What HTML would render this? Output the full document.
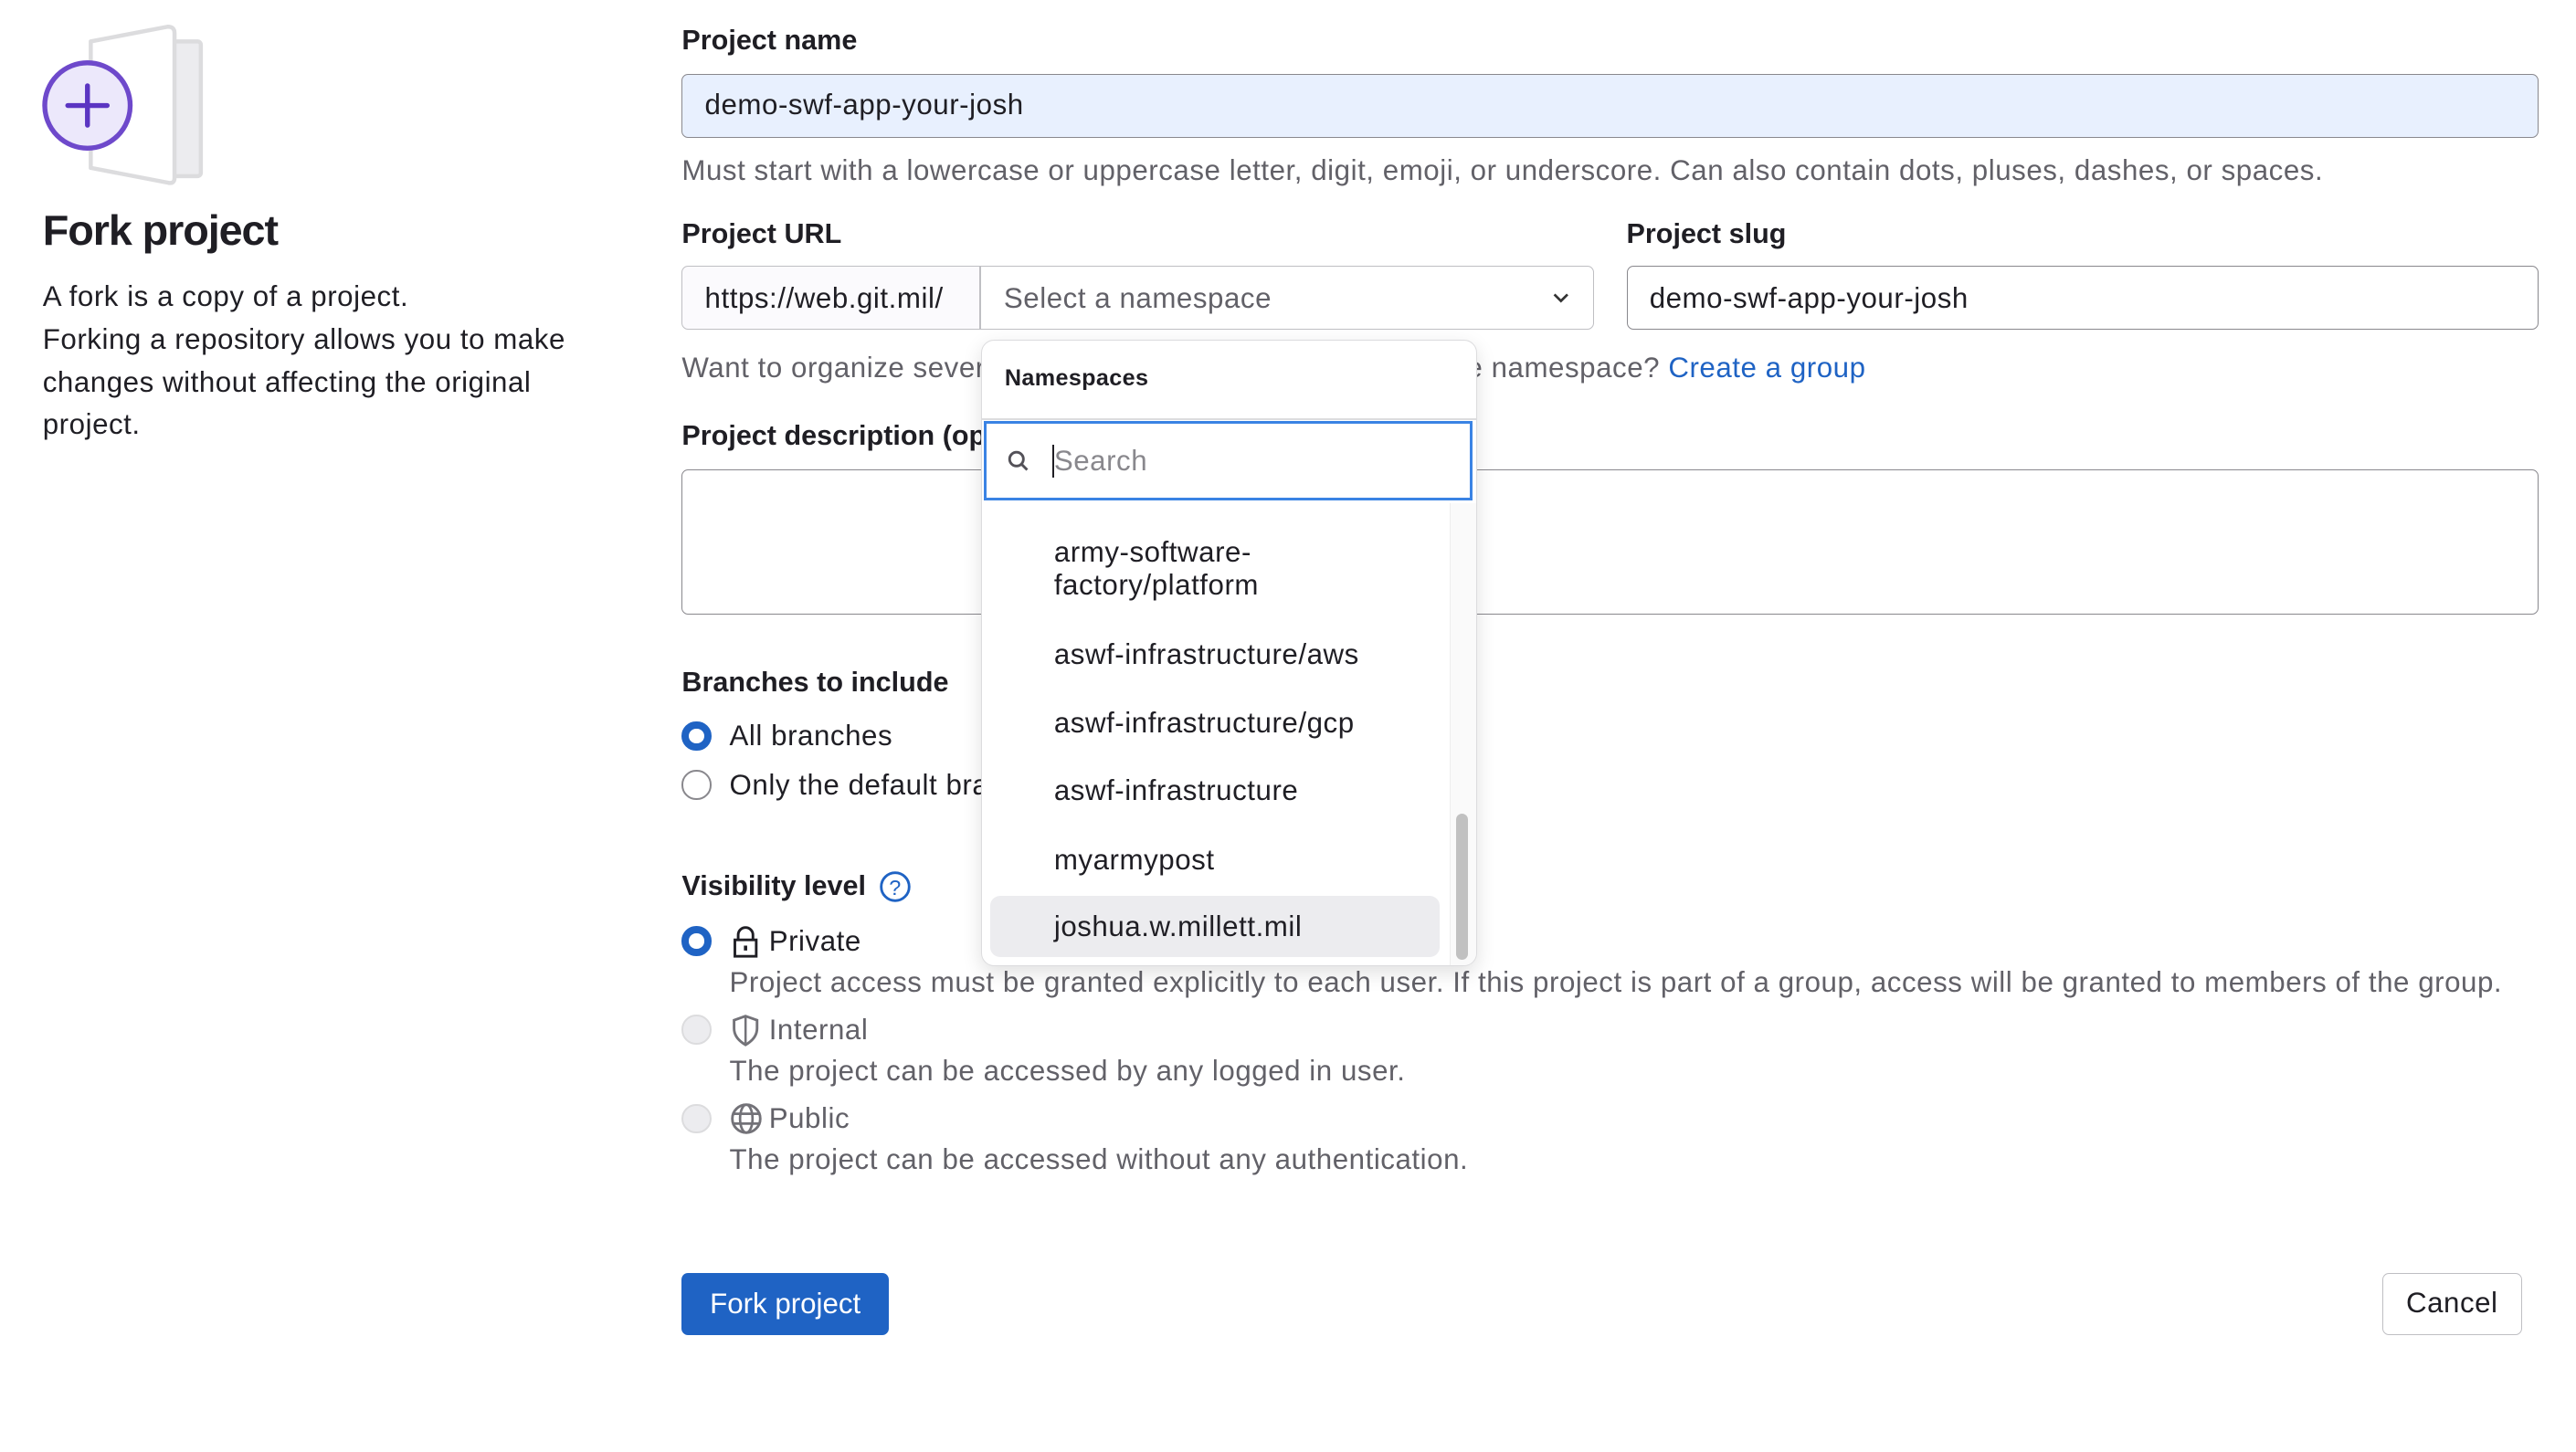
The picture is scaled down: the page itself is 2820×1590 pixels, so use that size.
<!DOCTYPE html>
<html><head><meta charset="utf-8"><style>
html,body{margin:0;padding:0;background:#fff;}
body{width:2820px;height:1590px;overflow:hidden;}
#w{zoom:1.7985;width:1568px;height:884px;position:relative;font-family:"Liberation Sans",sans-serif;color:#1f1e24;font-size:17.4px;letter-spacing:0.3px;}
.a{position:absolute;white-space:nowrap;}
.lbl{font-weight:bold;font-size:17px;letter-spacing:0;}
.box{position:absolute;border:1px solid #89888d;border-radius:4px;box-sizing:border-box;}
.muted{color:#626168;}
.rad{position:absolute;width:18px;height:18px;border-radius:50%;box-sizing:border-box;}
.on{background:#fff;border:5px solid #1f63c4;}
.off{border:1.5px solid #89888d;background:#fff;}
.dis{border:1.5px solid #dcdcde;background:#ececef;}
.it{position:absolute;left:44px;line-height:20px;}
</style></head><body><div id="w">
<svg class="a" style="left:22px;top:12px" width="110" height="105" viewBox="0 0 110 105">
<rect x="80" y="13" width="20" height="82" rx="2" fill="#ececef" stroke="#dcdcde" stroke-width="2.5"/>
<path d="M33 13 L80 4 Q84 4 84 8 L84 96 Q84 100 80 99 L33 90 Z" fill="#fff" stroke="#dcdcde" stroke-width="2.5" stroke-linejoin="round"/>
<circle cx="31" cy="52" r="26" fill="#ece8fb" stroke="#6e49cb" stroke-width="3"/>
<path d="M31 40 V64 M19 52 H43" stroke="#5b35c2" stroke-width="3" stroke-linecap="round"/>
</svg>
<div class="a" style="left:26px;top:125px;font-size:26px;font-weight:bold;letter-spacing:-0.6px;">Fork project</div>
<div class="a" style="left:26px;top:168px;line-height:26px;">A fork is a copy of a project.<br>Forking a repository allows you to make<br>changes without affecting the original<br>project.</div>

<div class="a lbl" style="left:415px;top:15px;">Project name</div>
<div class="box" style="left:415px;top:45px;width:1130px;height:39px;background:#e8f0fe;"></div>
<div class="a" style="left:429px;top:54px;">demo-swf-app-your-josh</div>
<div class="a muted" style="left:415px;top:94px;">Must start with a lowercase or uppercase letter, digit, emoji, or underscore. Can also contain dots, pluses, dashes, or spaces.</div>

<div class="a lbl" style="left:415px;top:133px;">Project URL</div>
<div class="a lbl" style="left:990px;top:133px;">Project slug</div>
<div class="box" style="left:415px;top:162px;width:182px;height:39px;background:#fbfafd;border-color:#bfbfc3;border-radius:4px 0 0 4px;"></div>
<div class="a" style="left:429px;top:172px;">https://web.git.mil/</div>
<div class="box" style="left:596px;top:162px;width:374px;height:39px;border-color:#bfbfc3;border-radius:0 4px 4px 0;"></div>
<div class="a muted" style="left:611px;top:172px;">Select a namespace</div>
<svg class="a" style="left:944px;top:176px" width="12" height="10" viewBox="0 0 12 10"><path d="M2 3 L6 7 L10 3" fill="none" stroke="#333" stroke-width="1.5"/></svg>
<div class="box" style="left:990px;top:162px;width:555px;height:39px;"></div>
<div class="a" style="left:1004px;top:172px;">demo-swf-app-your-josh</div>
<div class="a muted" style="left:415px;top:214px;">Want to organize several dependent projects under the same namespace? <span style="color:#1f63c4">Create a group</span></div>

<div class="a lbl" style="left:415px;top:256px;">Project description (optional)</div>
<div class="box" style="left:415px;top:286px;width:1130px;height:88px;"></div>

<div class="a lbl" style="left:415px;top:406px;">Branches to include</div>
<div class="rad on" style="left:415px;top:439px;"></div>
<div class="a" style="left:444px;top:438px;">All branches</div>
<div class="rad off" style="left:415px;top:469px;"></div>
<div class="a" style="left:444px;top:468px;">Only the default branch</div>

<div class="a lbl" style="left:415px;top:530px;">Visibility level</div>
<svg class="a" style="left:535px;top:530px" width="20" height="20" viewBox="0 0 20 20"><circle cx="10" cy="10" r="8.5" fill="none" stroke="#1f63c4" stroke-width="1.6"/><text x="10" y="15" text-anchor="middle" font-size="13" fill="#1f63c4" font-family="Liberation Sans">?</text></svg>
<div class="rad on" style="left:415px;top:564px;"></div>
<svg class="a" style="left:445px;top:563px" width="18" height="20" viewBox="0 0 18 20"><path d="M4.5 9 V6 a4.5 4.5 0 0 1 9 0 V9" fill="none" stroke="#1f1e24" stroke-width="1.6"/><rect x="2.5" y="9" width="13" height="10" fill="none" stroke="#1f1e24" stroke-width="1.6"/><rect x="8" y="12.5" width="2" height="3" fill="#1f1e24"/></svg>
<div class="a" style="left:468px;top:563px;">Private</div>
<div class="a muted" style="left:444px;top:588px;">Project access must be granted explicitly to each user. If this project is part of a group, access will be granted to members of the group.</div>
<div class="rad dis" style="left:415px;top:618px;"></div>
<svg class="a" style="left:445px;top:617px" width="18" height="20" viewBox="0 0 18 20"><path d="M9 1.5 L16 4 V9 Q16 15 9 19 Q2 15 2 9 V4 Z" fill="none" stroke="#737278" stroke-width="1.6"/><path d="M9 2 V18" stroke="#737278" stroke-width="1.4"/></svg>
<div class="a muted" style="left:468px;top:617px;">Internal</div>
<div class="a muted" style="left:444px;top:642px;">The project can be accessed by any logged in user.</div>
<div class="rad dis" style="left:415px;top:672px;"></div>
<svg class="a" style="left:444px;top:671px" width="20" height="20" viewBox="0 0 20 20"><circle cx="10" cy="10" r="8.5" fill="none" stroke="#737278" stroke-width="1.6"/><ellipse cx="10" cy="10" rx="3.8" ry="8.5" fill="none" stroke="#737278" stroke-width="1.5"/><path d="M1.5 7 H18.5 M1.5 13 H18.5" stroke="#737278" stroke-width="1.5"/></svg>
<div class="a muted" style="left:468px;top:671px;">Public</div>
<div class="a muted" style="left:444px;top:696px;">The project can be accessed without any authentication.</div>

<div class="a" style="left:415px;top:775px;width:126px;height:38px;background:#1f63c4;border-radius:4px;color:#fff;text-align:center;line-height:38px;letter-spacing:0;">Fork project</div>
<div class="a" style="left:1450px;top:775px;width:85px;height:38px;border:1px solid #bfbfc3;box-sizing:border-box;border-radius:4px;text-align:center;line-height:36px;">Cancel</div>

<div class="a" style="left:597px;top:207px;width:302px;height:381px;background:#fff;border:1px solid #dcdcde;box-sizing:border-box;border-radius:8px;box-shadow:0 4px 12px rgba(0,0,0,.12);overflow:hidden;">
<div class="a" style="left:14px;top:15px;font-size:14px;font-weight:bold;letter-spacing:0.2px;">Namespaces</div>
<div class="a" style="left:0;top:47px;width:302px;height:1px;background:#dcdcde;"></div>
<div class="a" style="left:1px;top:49px;width:298px;height:48px;border:2px solid #3a83e4;box-sizing:border-box;"></div>
<svg class="a" style="left:15px;top:66px" width="14" height="14" viewBox="0 0 14 14"><circle cx="6" cy="6" r="4.2" fill="none" stroke="#535158" stroke-width="1.6"/><path d="M9 9 L12.5 12.5" stroke="#535158" stroke-width="1.6"/></svg>
<div class="a" style="left:43px;top:63px;width:1px;height:20px;background:#1f1e24;"></div>
<div class="a" style="left:44px;top:63px;color:#89888d;">Search</div>
<div class="it" style="top:119px;">army-software-<br>factory/platform</div>
<div class="it" style="top:181px;">aswf-infrastructure/aws</div>
<div class="it" style="top:223px;">aswf-infrastructure/gcp</div>
<div class="it" style="top:264px;">aswf-infrastructure</div>
<div class="it" style="top:306px;">myarmypost</div>
<div class="a" style="left:5px;top:338px;width:274px;height:37px;background:#ececef;border-radius:6px;"></div>
<div class="it" style="top:347px;">joshua.w.millett.mil</div>
<div class="a" style="left:285px;top:99px;width:16px;height:282px;background:#fafafa;border-left:1px solid #eee;"></div>
<div class="a" style="left:289px;top:288px;width:7px;height:89px;background:#c1c1c1;border-radius:4px;"></div>
</div>
</div></body></html>
